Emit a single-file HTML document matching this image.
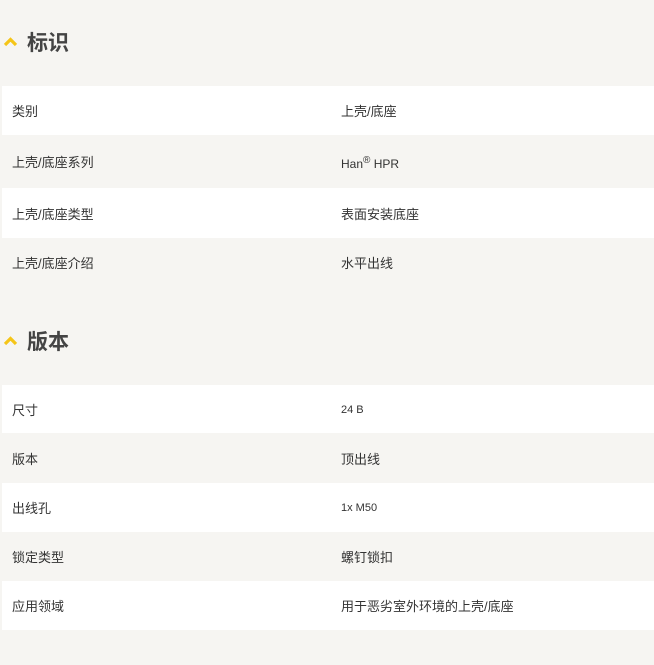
<!DOCTYPE html>
<html><head><meta charset="utf-8"><style>
body{margin:0;background:#f6f5f2;width:654px;height:665px;overflow:hidden;font-family:"Liberation Sans","Noto Sans CJK SC",sans-serif;color:#333;}
.h{position:absolute;left:0;height:30px;display:flex;align-items:center;}
.h svg{margin-left:3px;}
.h span{margin-left:9px;font-size:21px;font-weight:bold;color:#444;}
.row{position:absolute;left:2px;width:652px;font-size:13px;color:#333;}
.row .a,.row .b{position:absolute;top:0;bottom:0;display:flex;align-items:center;}
.row .a{left:10px}.row .b{left:339px}
.w{background:#fff}.g{background:#f6f5f2}
sup{font-size:10px;vertical-align:5px;}
</style></head><body>
<div class="h" style="top:27px"><svg width="15" height="10" viewBox="0 0 15 10"><path d="M2 8 L7.5 2.5 L13 8" fill="none" stroke="#f5c518" stroke-width="3.2"/></svg><span>标识</span></div>
<div class="row w" style="top:86px;height:49px"><div class="a">类别</div><div class="b">上壳/底座</div></div>
<div class="row g" style="top:135px;height:53px"><div class="a">上壳/底座系列</div><div class="b" style="font-size:12px;padding-top:2px"><span>Han<sup>®</sup> HPR</span></div></div>
<div class="row w" style="top:188px;height:50px"><div class="a">上壳/底座类型</div><div class="b">表面安装底座</div></div>
<div class="row g" style="top:238px;height:49px"><div class="a">上壳/底座介绍</div><div class="b">水平出线</div></div>
<div class="h" style="top:326px"><svg width="15" height="10" viewBox="0 0 15 10"><path d="M2 8 L7.5 2.5 L13 8" fill="none" stroke="#f5c518" stroke-width="3.2"/></svg><span>版本</span></div>
<div class="row w" style="top:385px;height:48px"><div class="a">尺寸</div><div class="b" style="font-size:11px;padding-top:2px">24 B</div></div>
<div class="row g" style="top:433px;height:50px"><div class="a">版本</div><div class="b">顶出线</div></div>
<div class="row w" style="top:483px;height:49px"><div class="a">出线孔</div><div class="b" style="font-size:11px;padding-top:1px">1x M50</div></div>
<div class="row g" style="top:532px;height:49px"><div class="a">锁定类型</div><div class="b">螺钉锁扣</div></div>
<div class="row w" style="top:581px;height:49px"><div class="a">应用领域</div><div class="b">用于恶劣室外环境的上壳/底座</div></div>
</body></html>
